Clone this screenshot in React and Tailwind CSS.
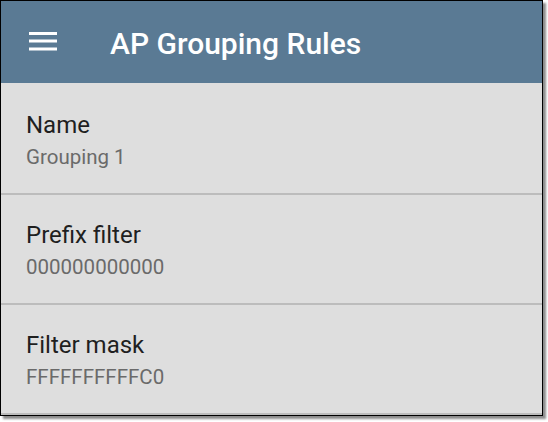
import React from 'react';

const rows = [
  { label: 'Name', value: 'Grouping 1' },
  { label: 'Prefix filter', value: '000000000000' },
  { label: 'Filter mask', value: 'FFFFFFFFFFC0' },
];

const MenuIcon = () => (
  <svg width="28" height="19" viewBox="0 0 28 19" className="block">
    <rect x="0" y="0" width="28" height="3" fill="#ffffff" />
    <rect x="0" y="7.5" width="28" height="3" fill="#ffffff" />
    <rect x="0" y="15.5" width="28" height="3" fill="#ffffff" />
  </svg>
);

const App = () => {
  return (
    <div className="w-[548px] h-[422px] bg-white" style={{ fontFamily: 'Roboto, "Noto Sans", sans-serif' }}>
      <div className="w-[543px] border border-black bg-[#dedede] shadow-[3px_3px_2px_rgba(0,0,0,0.45)]">
        {/* Toolbar */}
        <div className="h-[82px] bg-[#5a7a94] flex items-start">
          <div className="ml-[28px] mt-[31px]">
            <MenuIcon />
          </div>
          <h1 className="ml-[53px] mt-[27px] text-[30px] leading-[32px] font-medium text-white">
            AP Grouping Rules
          </h1>
        </div>

        {/* Settings list */}
        {rows.map((row, i) => (
          <div
            key={row.label}
            className={
              i === 0
                ? 'h-[110px] pl-[25px] pt-[29px]'
                : i === rows.length - 1
                ? 'h-[112px] pl-[25px] pt-[27px] border-t-2 border-b-2 border-[#bcbcbc]'
                : 'h-[110px] pl-[25px] pt-[27px] border-t-2 border-[#bcbcbc]'
            }
          >
            <div className="text-[24px] leading-[26px] text-[#1f1f1f]">{row.label}</div>
            <div className="mt-[7px] text-[20.5px] leading-[24px] text-[#6a6a6a]">{row.value}</div>
          </div>
        ))}
      </div>
    </div>
  );
};

export default App;
